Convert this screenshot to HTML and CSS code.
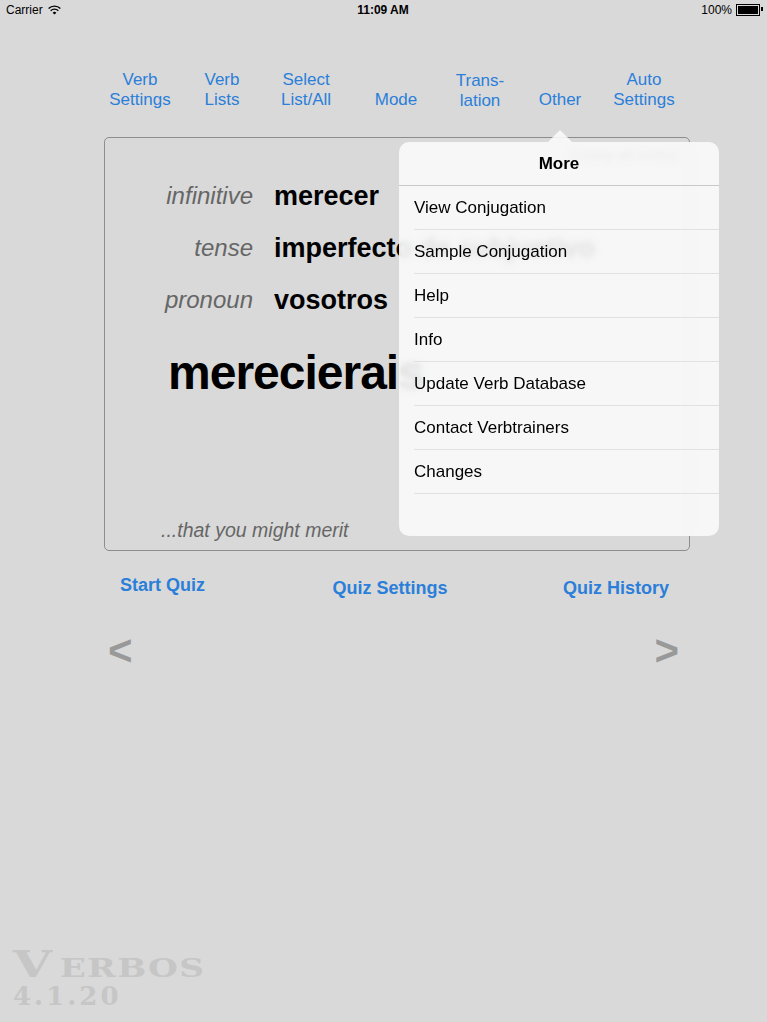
FILE: index.html
```html
<!DOCTYPE html>
<html>

<head>
	<title>Verbos</title>
	<link rel="stylesheet" href="styles.css">
</head>

<body>
	<div class="status-bar">
		<div class="carrier">
			Carrier
			<svg class="wifi" width="13" height="10" viewBox="0 0 13 10">
				<path d="M0.6 3.6 A8.2 8.2 0 0 1 12.4 3.6" fill="none" stroke="#000" stroke-width="1.4"/>
				<path d="M2.7 5.7 A5.3 5.3 0 0 1 10.3 5.7" fill="none" stroke="#000" stroke-width="1.4"/>
				<path d="M6.5 9.6 L4.6 7.7 A2.7 2.7 0 0 1 8.4 7.7 Z" fill="#000"/>
			</svg>
		</div>
		<div class="clock">11:09 AM</div>
		<div class="battery-wrap">
			100%
			<span class="battery"><span class="battery-fill"></span></span>
		</div>
	</div>

	<nav class="toolbar">
		<a class="tool">Verb<br>Settings</a>
		<a class="tool">Verb<br>Lists</a>
		<a class="tool">Select<br>List/All</a>
		<a class="tool">Mode</a>
		<a class="tool low">Trans-<br>lation</a>
		<a class="tool">Other</a>
		<a class="tool">Auto<br>Settings</a>
	</nav>

	<div class="card">
		<div class="card-head">(Using all verbs)</div>
		<div class="rows">
			<div class="label">infinitive</div>
			<div class="value">merecer</div>
			<div class="label">tense</div>
			<div class="value">imperfecto de subjuntivo</div>
			<div class="label">pronoun</div>
			<div class="value">vosotros</div>
		</div>
		<div class="answer">merecierais</div>
		<div class="meaning">...that you might merit</div>
	</div>

	<div class="quiz-bar">
		<a class="quiz-link first">Start Quiz</a>
		<a class="quiz-link middle">Quiz Settings</a>
		<a class="quiz-link">Quiz History</a>
	</div>

	<div class="pager">
		<span class="arrow">&lt;</span>
		<span class="arrow">&gt;</span>
	</div>

	<div class="logo">
		<div class="logo-name"><span class="big">V</span>ERBOS</div>
		<div class="logo-version">4.1.20</div>
	</div>

	<!-- popover menu from the "Other" button -->
	<div class="popover">
		<div class="popover-title">More</div>
		<ul class="menu">
			<li>View Conjugation</li>
			<li>Sample Conjugation</li>
			<li>Help</li>
			<li>Info</li>
			<li>Update Verb Database</li>
			<li>Contact Verbtrainers</li>
			<li>Changes</li>
		</ul>
	</div>
</body>

</html>
```

FILE: styles.css
```css
html, body {
	height: 100%;
}

body {
	margin: 0;
	height: 1022px;
	overflow: hidden;
	font-family: "Liberation Sans", Arial, sans-serif;
	background-color: #d9d9d9;
	display: flex;
	flex-direction: column;
	position: relative;
}

/* status bar */
.status-bar {
	height: 20px;
	display: grid;
	grid-template-columns: 1fr auto 1fr;
	align-items: center;
	padding: 0 7px 0 6px;
	font-size: 12px;
	color: #000;
}

.carrier {
	display: flex;
	align-items: center;
	gap: 5px;
}

.clock {
	font-weight: bold;
}

.battery-wrap {
	display: flex;
	justify-content: flex-end;
	align-items: center;
	gap: 4px;
}

.battery {
	position: relative;
	width: 20px;
	height: 8px;
	border: 1px solid #000;
	padding: 1px;
	display: flex;
}

.battery::after {
	content: "";
	position: absolute;
	right: -4px;
	top: 2px;
	width: 2px;
	height: 4px;
	background-color: #000;
}

.battery-fill {
	flex: 1;
	background-color: #000;
}

/* top toolbar */
.toolbar {
	margin-top: 50px;
	padding-left: 98px;
	display: grid;
	grid-template-columns: 84px 80px 88px 92px 76px 84px 84px;
	align-items: end;
	font-size: 17px;
	line-height: 20px;
	color: #2b7fd9;
	text-align: center;
}

.tool.low {
	position: relative;
	top: 1px;
}

/* verb card */
.card {
	margin: 27px 0 0 104px;
	width: 586px;
	height: 414px;
	box-sizing: border-box;
	border: 1px solid #8d8d8d;
	border-radius: 5px;
	display: flex;
	flex-direction: column;
	overflow: hidden;
}

.card-head {
	padding: 6px 11px 0 0;
	text-align: right;
	font-size: 15px;
	line-height: 22px;
	font-style: italic;
	color: #666;
}

.rows {
	margin-top: 4px;
	display: grid;
	grid-template-columns: 148px 1fr;
	column-gap: 21px;
	line-height: 52px;
}

.label {
	text-align: right;
	font-size: 24px;
	font-style: italic;
	color: #666;
}

.value {
	font-size: 27px;
	font-weight: bold;
	color: #000;
	white-space: nowrap;
}

.answer {
	margin-top: 11px;
	padding-left: 63px;
	font-size: 48px;
	line-height: 72px;
	font-weight: bold;
	letter-spacing: -1px;
	color: #000;
}

.meaning {
	margin-top: auto;
	padding: 0 0 8px 56px;
	font-size: 19.5px;
	line-height: 24px;
	font-style: italic;
	color: #666;
}

/* quiz links */
.quiz-bar {
	margin: 22px 0 0 120px;
	width: 549px;
	display: flex;
	justify-content: space-between;
	align-items: flex-start;
	font-size: 18px;
	line-height: 24px;
	font-weight: bold;
	color: #2b7fd9;
}

.quiz-link {
	margin-top: 3px;
}

.quiz-link.first {
	margin-top: 0;
}

.quiz-link.middle {
	margin-left: 12px;
}

.pager {
	margin: 31px 0 0 108px;
	width: 571px;
	display: flex;
	justify-content: space-between;
	font-size: 42px;
	line-height: 40px;
	font-weight: bold;
	color: #999;
}

/* logo */
.logo {
	margin-top: auto;
	padding: 0 0 13px 13px;
	display: flex;
	flex-direction: column;
	align-items: flex-start;
	font-family: "DejaVu Serif", serif;
	font-weight: bold;
	color: #c6c6c6;
}

.logo-name {
	font-size: 26px;
	line-height: 30px;
	letter-spacing: 1px;
	transform: scaleX(1.32);
	transform-origin: left bottom;
}

.logo-name .big {
	font-size: 38px;
	letter-spacing: 6px;
}

.logo-version {
	font-size: 26px;
	line-height: 26px;
	letter-spacing: 3px;
}

/* popover */
.popover {
	position: absolute;
	left: 399px;
	top: 142px;
	width: 320px;
	height: 394px;
	border-radius: 10px;
	background-color: rgba(249, 249, 249, 0.9);
	backdrop-filter: blur(3px);
}

.popover::before {
	content: "";
	position: absolute;
	left: 149px;
	top: -12px;
	width: 24px;
	height: 12px;
	background-color: rgba(249, 249, 249, 0.9);
	clip-path: polygon(0 100%, 50% 0, 100% 100%);
}

.popover-title {
	height: 44px;
	line-height: 44px;
	text-align: center;
	font-size: 17px;
	font-weight: bold;
	color: #000;
	border-bottom: 1px solid #c8c8c8;
	box-sizing: border-box;
}

.menu {
	list-style: none;
	margin: 0;
	padding: 0 0 0 15px;
}

.menu li {
	height: 44px;
	line-height: 44px;
	font-size: 17px;
	color: #000;
	border-bottom: 1px solid #e1e1e1;
	box-sizing: border-box;
}
```
